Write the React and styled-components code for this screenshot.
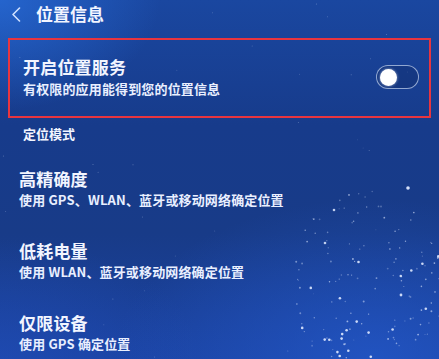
import React from "react";
import styled, { createGlobalStyle } from "styled-components";

const GlobalStyle = createGlobalStyle`
  html, body { margin: 0; padding: 0; background: #173c8c; }
  body { font-family: "Noto Sans CJK SC", "Noto Sans", "Liberation Sans", sans-serif; }
  * { box-sizing: border-box; }
`;

const Screen = styled.div`
  position: relative;
  width: 439px;
  height: 359px;
  overflow: hidden;
  color: #f2f5ff;
  background:
    radial-gradient(ellipse 160px 110px at 0% 0%, rgba(40, 110, 220, 0.75), rgba(40, 110, 220, 0) 100%),
    radial-gradient(ellipse 260px 160px at 85% 100%, rgba(36, 90, 205, 0.7), rgba(36, 90, 205, 0) 100%),
    radial-gradient(ellipse 200px 120px at 0% 100%, rgba(34, 80, 190, 0.5), rgba(34, 80, 190, 0) 100%),
    linear-gradient(180deg, #1a47a0 0%, #173b8b 35%, #183b88 65%, #1b43a2 100%);
`;

const StarLayer = styled.svg`
  position: absolute;
  inset: 0;
  pointer-events: none;
`;

const Content = styled.div`
  position: relative;
  display: flex;
  flex-direction: column;
`;

const Header = styled.div`
  display: flex;
  align-items: center;
  height: 28px;
  padding-left: 11px;
  gap: 15px;
`;

const HeaderTitle = styled.div`
  font-size: 17px;
  font-weight: 700;
  line-height: 24px;
`;

const Highlight = styled.div`
  margin: 10px 8px 0 8px;
  height: 80px;
  border: 2px solid #e8353f;
  display: flex;
  align-items: center;
  justify-content: space-between;
  padding: 0 10px 2px 13px;
`;

const TextBlock = styled.div`
  display: flex;
  flex-direction: column;
  gap: ${(p) => p.$gap || 3}px;
`;

const Title = styled.div`
  font-size: 17px;
  font-weight: 700;
  line-height: 20px;
  letter-spacing: 0.2px;
`;

const Sub = styled.div`
  font-size: 13px;
  font-weight: 700;
  line-height: 16px;
  letter-spacing: 0.15px;
  color: #e9efff;
`;

const Toggle = styled.div`
  width: 43px;
  height: 24px;
  border-radius: 12px;
  border: 1.5px solid rgba(190, 205, 235, 0.75);
  background: rgba(10, 30, 80, 0.25);
  display: flex;
  align-items: center;
  padding-left: 3px;
`;

const Knob = styled.div`
  width: 17px;
  height: 17px;
  border-radius: 50%;
  background: #ffffff;
  box-shadow: 0 0 3px rgba(255, 255, 255, 0.6);
`;

const SectionLabel = styled.div`
  margin: 8px 0 0 23px;
  font-size: 13px;
  font-weight: 700;
  line-height: 16px;
`;

const Options = styled.div`
  margin-top: 27px;
  padding-left: 19px;
  display: flex;
  flex-direction: column;
  gap: 33px;
`;

function Stars() {
  let s = 12345;
  const rnd = () => {
    s = (s * 16807) % 2147483647;
    return (s - 1) / 2147483646;
  };
  const stars = [];
  for (let i = 0; i < 150; i++) {
    const a = rnd() * Math.PI * 2;
    const r = Math.sqrt(rnd());
    const x = 365 + Math.cos(a) * r * 80;
    const y = 285 + Math.sin(a) * r * 95;
    const big = rnd() < 0.12;
    stars.push({ x, y, r: big ? 1.3 : 0.6 + rnd() * 0.4, o: big ? 0.9 : 0.25 + rnd() * 0.4 });
  }
  for (let i = 0; i < 40; i++) {
    stars.push({ x: rnd() * 439, y: rnd() * 359, r: 0.5, o: 0.15 + rnd() * 0.25 });
  }
  stars.push({ x: 408, y: 188, r: 1.8, o: 0.95 });
  stars.push({ x: 334, y: 210, r: 1.3, o: 0.85 });
  stars.push({ x: 325, y: 243, r: 1.3, o: 0.85 });
  stars.push({ x: 401, y: 295, r: 1.4, o: 0.9 });
  return (
    <StarLayer width="439" height="359" viewBox="0 0 439 359">
      {stars.map((st, i) => (
        <circle key={i} cx={st.x.toFixed(1)} cy={st.y.toFixed(1)} r={st.r} fill="#dfe9ff" opacity={st.o} />
      ))}
    </StarLayer>
  );
}

function BackIcon() {
  return (
    <svg width="10" height="15" viewBox="0 0 10 15">
      <path d="M8.5 1 L2 7.5 L8.5 14" fill="none" stroke="#cfe0ff" strokeWidth="1.6" strokeLinecap="round" strokeLinejoin="round" />
    </svg>
  );
}

const options = [
  { title: "高精确度", sub: "使用 GPS、WLAN、蓝牙或移动网络确定位置" },
  { title: "低耗电量", sub: "使用 WLAN、蓝牙或移动网络确定位置" },
  { title: "仅限设备", sub: "使用 GPS 确定位置" },
];

export default function App() {
  return (
    <>
      <GlobalStyle />
      <Screen>
        <Stars />
        <Content>
          <Header>
            <BackIcon />
            <HeaderTitle>位置信息</HeaderTitle>
          </Header>
          <Highlight>
            <TextBlock $gap={4}>
              <Title>开启位置服务</Title>
              <Sub>有权限的应用能得到您的位置信息</Sub>
            </TextBlock>
            <Toggle>
              <Knob />
            </Toggle>
          </Highlight>
          <SectionLabel>定位模式</SectionLabel>
          <Options>
            {options.map((o) => (
              <TextBlock key={o.title}>
                <Title>{o.title}</Title>
                <Sub>{o.sub}</Sub>
              </TextBlock>
            ))}
          </Options>
        </Content>
      </Screen>
    </>
  );
}
